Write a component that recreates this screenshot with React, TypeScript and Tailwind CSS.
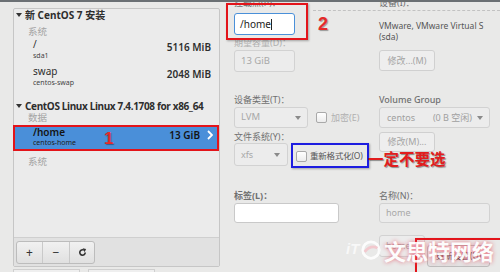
import React from "react";

const font = "font-['Noto_Sans','Noto_Sans_CJK_SC',sans-serif]";

function Caret({ color = "border-t-[#6a6a6a]" }: { color?: string }) {
  return (
    <span
      className={`inline-block w-0 h-0 border-l-[3.5px] border-r-[3.5px] border-t-[4px] border-l-transparent border-r-transparent ${color}`}
    />
  );
}

function TreeTriangle() {
  return (
    <span className="inline-block w-0 h-0 border-l-[3px] border-r-[3px] border-t-[4px] border-l-transparent border-r-transparent border-t-[#333]" />
  );
}

function Checkbox() {
  return (
    <span className="inline-block shrink-0 w-[11px] h-[11px] rounded-[2px] border border-[#a9a9a9] bg-gradient-to-b from-white to-[#ececec]" />
  );
}

function Label({ children, className = "" }: { children: React.ReactNode; className?: string }) {
  return <div className={`h-[12px] leading-[12px] text-[9px] text-[#707070] whitespace-nowrap ${className}`}>{children}</div>;
}

function MountRow({
  name,
  device,
  size,
}: {
  name: string;
  device: string;
  size: string;
}) {
  return (
    <div className="flex pl-[19px] pr-[8px]">
      <div className="flex-1">
        <div className="h-[12px] leading-[12px] text-[10px] text-[#2e2e2e]">{name}</div>
        <div className="h-[11px] leading-[11px] text-[7px] text-[#444]">{device}</div>
      </div>
      <div className="mt-[3px] h-[12px] leading-[12px] text-[10px] font-semibold text-[#2e2e2e]">{size}</div>
    </div>
  );
}

function LeftPanel() {
  return (
    <div className="flex flex-col">
      <div className="w-[207px] h-[259px] mt-[8px] border border-[#c6c6c6] bg-[#ebebeb] rounded-[2px] flex flex-col">
        <div className="flex-1">
          <div className="flex items-center h-[12px] pl-[2px] gap-[3px]">
            <TreeTriangle />
            <span className="text-[10px] font-bold text-[#2e2e2e] leading-[12px]">新 CentOS 7 安装</span>
          </div>
          <div className="mt-[5px] h-[12px] leading-[12px] pl-[14px] text-[9.5px] text-[#a3a3a3]">系统</div>
          <MountRow name="/" device="sda1" size="5116 MiB" />
          <div className="mt-[4px]">
            <MountRow name="swap" device="centos-swap" size="2048 MiB" />
          </div>
          <div className="mt-[12px] flex items-center h-[12px] pl-[2px] gap-[3px]">
            <TreeTriangle />
            <span className="text-[10px] font-bold text-[#2e2e2e] leading-[12px] tracking-[-0.35px]">
              CentOS Linux Linux 7.4.1708 for x86_64
            </span>
          </div>
          <div className="h-[11px] leading-[11px] pl-[14px] text-[9.5px] text-[#a3a3a3]">数据</div>
          <div className="mt-[2px] h-[24px] bg-[#4a8fd9] flex pl-[19px] pr-[6px]">
            <div className="flex-1 pt-[1px]">
              <div className="h-[12px] leading-[12px] text-[10px] font-semibold text-[#141414]">/home</div>
              <div className="h-[10px] leading-[10px] text-[7px] text-[#1c1c1c]">centos-home</div>
            </div>
            <div className="mt-[4px] flex items-start gap-[7px]">
              <span className="h-[12px] leading-[12px] text-[10px] font-semibold text-[#141414]">13 GiB</span>
              <svg width="6" height="10" viewBox="0 0 6 10" className="mt-[1px]">
                <path d="M1 1 L5 5 L1 9" fill="none" stroke="#ffffff" strokeWidth="1.8" />
              </svg>
            </div>
          </div>
          <div className="mt-[7px] h-[12px] leading-[12px] pl-[14px] text-[9.5px] text-[#a3a3a3]">系统</div>
        </div>
        <div className="h-[29px] border-t border-[#cfcfcf] bg-[#e1e1e1] pl-[2px] pt-[3px]">
          <div className="flex w-[79px] h-[23px] rounded-[3px] border border-[#bcbcbc] bg-gradient-to-b from-[#f1f1f1] to-[#e0e0e0] text-[#333]">
            <div className="w-[26px] flex items-center justify-center border-r border-[#c9c9c9] text-[12px]">+</div>
            <div className="w-[27px] flex items-center justify-center border-r border-[#c9c9c9] text-[12px]">−</div>
            <div className="flex-1 flex items-center justify-center">
              <svg width="9" height="9" viewBox="0 0 10 10">
                <path d="M8 5 A3 3 0 1 1 6.5 2.4" fill="none" stroke="#333" strokeWidth="1.8" />
                <path d="M5.2 0.4 L9 1.2 L7.4 4.6 Z" fill="#333" />
              </svg>
            </div>
          </div>
        </div>
      </div>
      <div className="mt-[2px] flex gap-[8px]">
        <div className="w-[67px] h-[10px] border border-[#cfcfcf] bg-[#efefef]" />
        <div className="w-[67px] h-[10px] border border-[#cfcfcf] bg-[#efefef]" />
      </div>
    </div>
  );
}

function RightPanel() {
  return (
    <div className="flex-1 flex flex-col pl-[14px]">
      <div className="flex h-[11px]">
        <div className="w-[79px] h-[10px] overflow-hidden">
          <div className="mt-[-3px] h-[12px] leading-[12px] text-[9px] text-[#707070]">挂载点(P)：</div>
        </div>
        <div className="flex-1 h-[11px] border-b border-dashed border-[#c2c2c2] pl-[66px] overflow-hidden">
          <div className="mt-[-3px] h-[12px] leading-[12px] text-[9px] text-[#707070]">设备(I)：</div>
        </div>
      </div>
      <div className="flex flex-1 border-b border-dashed border-[#c2c2c2] h-[256px]">
        <div className="w-[145px] flex flex-col">
          <div className="mt-[2px] w-[61px] h-[22px] rounded-[3px] border border-[#4a90d9] bg-white flex items-center pl-[5px] text-[10px] text-[#222]">
            /home<span className="w-px h-[11px] bg-[#222]" />
          </div>
          <Label className="mt-[2px] text-[#b0b0b0]">期望容量(D)：</Label>
          <div className="mt-[1px] w-[61px] h-[22px] rounded-[3px] border border-[#d2d2d2] bg-[#ececec] flex items-center pl-[6px] text-[9.5px] text-[#a8a8a8]">
            13 GiB
          </div>
          <Label className="mt-[22px]">设备类型(T)：</Label>
          <div className="mt-[1px] flex items-center h-[21px]">
            <div className="w-[74px] h-[21px] rounded-[3px] border border-[#d2d2d2] bg-[#ececec] flex items-center justify-between pl-[6px] pr-[6px] text-[9.5px] text-[#a8a8a8]">
              LVM
              <Caret color="border-t-[#8a8a8a]" />
            </div>
            <div className="ml-[8px] flex items-center gap-[4px] text-[9px] text-[#b0b0b0] whitespace-nowrap">
              <Checkbox />
              加密(E)
            </div>
          </div>
          <Label className="mt-[3px]">文件系统(Y)：</Label>
          <div className="flex items-center h-[23px]">
            <div className="w-[54px] h-[23px] rounded-[3px] border border-[#d2d2d2] bg-[#ececec] flex items-center justify-between pl-[6px] pr-[7px] text-[9px] text-[#a8a8a8]">
              xfs
              <Caret color="border-t-[#8a8a8a]" />
            </div>
            <div className="ml-[8px] mt-[3px] flex items-center gap-[3px] text-[8.5px] tracking-[-0.2px] text-[#555] whitespace-nowrap">
              <Checkbox />
              重新格式化(O)
            </div>
          </div>
          <Label className="mt-[24px] font-bold text-[#3a3a3a]">标签(L)：</Label>
          <div className="mt-[1px] w-[105px] h-[20px] rounded-[3px] border border-[#c9c9c9] bg-white" />
        </div>
        <div className="w-[111px] flex flex-col">
          <div className="mt-[9px] leading-[11px] text-[8.5px] text-[#555] whitespace-nowrap">
            VMware, VMware Virtual S
            <br />
            (sda)
          </div>
          <div className="mt-[8px] w-[56px] h-[21px] rounded-[3px] border border-[#d0d0d0] bg-[#eeeeee] flex items-center justify-center text-[9px] text-[#a4a4a4]">
            修改...(M)
          </div>
          <Label className="mt-[23px] font-medium text-[#6a6a6a]">Volume Group</Label>
          <div className="mt-[1px] w-[111px] h-[21px] rounded-[3px] border border-[#d2d2d2] bg-[#ececec] flex items-center pl-[7px] pr-[6px] text-[9px] text-[#a0a0a0]">
            <span className="flex-1">centos</span>
            <span className="mr-[5px]">(0 B 空闲)</span>
            <Caret color="border-t-[#8a8a8a]" />
          </div>
          <div className="mt-[4px] w-[56px] h-[20px] rounded-[3px] border border-[#d0d0d0] bg-[#eeeeee] flex items-center justify-center text-[9px] text-[#a4a4a4]">
            修改(M)...
          </div>
          <Label className="mt-[38px]">名称(N)：</Label>
          <div className="mt-[1px] w-[111px] h-[20px] rounded-[3px] border border-[#d2d2d2] bg-[#ececec] flex items-center pl-[6px] text-[9px] text-[#a8a8a8]">
            home
          </div>
          <div className="h-[12px]" />
          <div className="flex">
            <div className="w-[46px] h-[22px] rounded-[3px] border border-[#d2d2d2] bg-[#ececec] flex items-center pl-[6px] text-[9px] text-[#a8a8a8]">
              home
            </div>
            <div className="ml-auto mt-[10px] w-[63px] h-[22px] rounded-[3px] border border-[#bdbdbd] bg-gradient-to-b from-[#f3f3f3] to-[#e2e2e2] flex items-center justify-center text-[8.5px] text-[#444] whitespace-nowrap">
              更新设置(U)
            </div>
          </div>
        </div>
      </div>
    </div>
  );
}

export default function App() {
  return (
    <div className={`relative w-[500px] h-[272px] overflow-hidden bg-[#e9e9e8] ${font}`}>
      <div className="h-[2px] bg-[#6b7074]" />
      <div className="flex pl-[13px] mt-[-2px]">
        <LeftPanel />
        <RightPanel />
      </div>

      {/* annotations drawn over the screenshot */}
      <div className="absolute left-[13px] top-[125px] w-[206px] h-[26px] border-2 border-[#e3141a]" />
      <div className="absolute left-[104px] top-[129px] text-[17px] leading-[20px] font-bold text-[#e52a2a] font-['Liberation_Sans',sans-serif] [text-shadow:1px_1px_1px_rgba(0,0,0,0.35)]">
        1
      </div>
      <div className="absolute left-[226px] top-[3px] w-[82px] h-[37px] border-2 border-[#e3141a] shadow-[1px_1px_2px_rgba(0,0,0,0.3)]" />
      <div className="absolute left-[318px] top-[13px] text-[18px] leading-[22px] font-bold text-[#e52a2a] font-['Liberation_Sans',sans-serif] [text-shadow:1px_1px_1px_rgba(0,0,0,0.35)]">
        2
      </div>
      <div className="absolute left-[291px] top-[143px] w-[78px] h-[25px] border-2 border-[#1d1de0] shadow-[1px_1px_2px_rgba(0,0,0,0.3)]" />
      <div className="absolute left-[368px] top-[148px] text-[15.5px] leading-[20px] font-bold text-[#e11d1d] font-['Noto_Sans_CJK_SC',sans-serif] whitespace-nowrap [text-shadow:1px_1px_1px_rgba(0,0,0,0.4)]">
        一定不要选
      </div>
      <div className="absolute left-[415px] top-[238px] w-[92px] h-[40px] border-2 border-[#e3141a] shadow-[1px_1px_2px_rgba(0,0,0,0.3)]" />

      {/* watermark */}
      <div className="absolute left-[346px] top-[240px] text-[15px] leading-[18px] italic font-bold text-white opacity-70 font-['Liberation_Sans',sans-serif]">
        iT
      </div>
      <div className="absolute left-[360px] top-[236px] flex items-center gap-[2px] opacity-90 whitespace-nowrap">
        <svg width="22" height="22" viewBox="0 0 24 24">
          <circle cx="12" cy="12" r="9" fill="none" stroke="#ffffff" strokeWidth="3" />
          <path d="M5 14 Q12 6 19 10" fill="none" stroke="#f3c6cc" strokeWidth="3" />
        </svg>
        <span className="text-[22px] leading-[28px] font-bold text-white font-['Noto_Sans_CJK_SC',sans-serif] [text-shadow:0_0_4px_rgba(230,80,100,0.9)]">
          文思特网络
        </span>
      </div>
    </div>
  );
}
